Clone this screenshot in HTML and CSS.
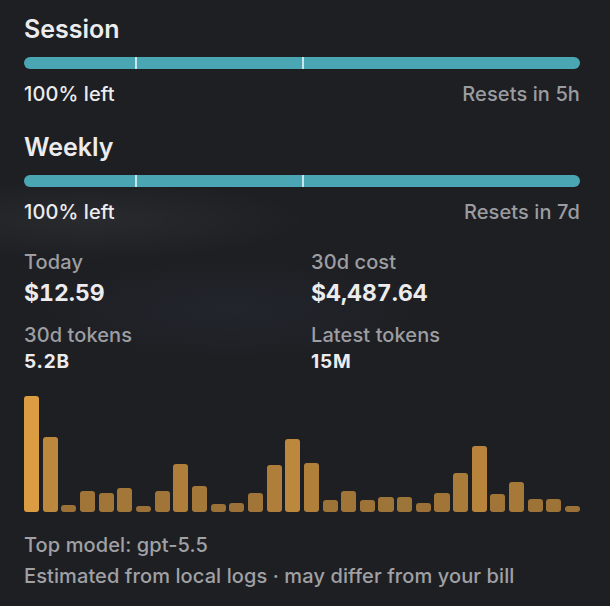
FILE: index.html
```html
<!DOCTYPE html>
<html lang="en">
<head>
    <meta charset="UTF-8">
    <meta name="viewport" content="width=device-width, initial-scale=1.0">
    <title>Usage</title>
    <link rel="stylesheet" href="styles.css">
</head>
<body>
    <div class="panel">
        <section class="limit">
            <div class="limit-title">Session</div>
            <div class="meter">
                <span class="tick" style="left: 20%"></span>
                <span class="tick" style="left: 50%"></span>
            </div>
            <div class="limit-foot">
                <span>100% left</span>
                <span class="muted">Resets in 5h</span>
            </div>
        </section>

        <section class="limit">
            <div class="limit-title">Weekly</div>
            <div class="meter">
                <span class="tick" style="left: 20%"></span>
                <span class="tick" style="left: 50%"></span>
            </div>
            <div class="limit-foot">
                <span>100% left</span>
                <span class="muted">Resets in 7d</span>
            </div>
        </section>

        <section class="stats">
            <div class="stat">
                <div class="stat-label">Today</div>
                <div class="stat-value big">$12.59</div>
            </div>
            <div class="stat">
                <div class="stat-label">30d cost</div>
                <div class="stat-value big">$4,487.64</div>
            </div>
            <div class="stat">
                <div class="stat-label">30d tokens</div>
                <div class="stat-value">5.2B</div>
            </div>
            <div class="stat">
                <div class="stat-label">Latest tokens</div>
                <div class="stat-value">15M</div>
            </div>
        </section>

        <div class="chart" id="chart"></div>

        <div class="footer">
            <div>Top model: gpt-5.5</div>
            <div>Estimated from local logs · may differ from your bill</div>
        </div>
    </div>

    <script>
        // daily token usage, last 30 days (px heights of the bars)
        const days = [116, 75, 7, 21, 19, 24, 6, 21, 48, 26, 8, 9, 19, 47, 73,
                      49, 12, 21, 12, 15, 15, 9, 19, 39, 66, 18, 30, 13, 13, 6];
        const chart = document.getElementById('chart');
        const max = Math.max(...days);

        days.forEach((h, i) => {
            const bar = document.createElement('div');
            bar.className = 'bar';
            bar.style.height = `${h}px`;
            bar.style.opacity = i === 0 ? 1 : (0.64 + 0.3 * h / max).toFixed(2);
            chart.appendChild(bar);
        });
    </script>
</body>
</html>
```

FILE: styles.css
```css
body {
    margin: 0;
    height: 606px;
    overflow: hidden;
    font-family: Inter, "Noto Sans", sans-serif;
    color: #ececee;
    background-color: #1e1f23;
    background-image:
        radial-gradient(ellipse 220px 40px at 90px 220px, rgba(255, 255, 255, 0.05), transparent),
        radial-gradient(ellipse 200px 50px at 230px 310px, rgba(70, 110, 150, 0.08), transparent);
}

.panel {
    padding: 14px 30px 0 24px;
}

.limit {
    margin-bottom: 26px;
}

.limit-title {
    font-size: 25px;
    line-height: 30px;
    font-weight: 600;
}

.meter {
    position: relative;
    height: 12px;
    margin: 13px 0;
    border-radius: 6px;
    background-color: #4ba6b4;
}

.meter .tick {
    position: absolute;
    top: 0;
    bottom: 0;
    width: 2px;
    background-color: #c3e7ec;
}

.limit-foot {
    display: flex;
    justify-content: space-between;
    font-size: 20px;
    line-height: 24px;
    font-weight: 500;
    letter-spacing: 0.1px;
}

.muted {
    color: #9b9ca0;
}

.stats {
    display: grid;
    grid-template-columns: 287px 1fr;
    row-gap: 16px;
    margin-top: 1px;
}

.stat-label {
    font-size: 20px;
    line-height: 24px;
    font-weight: 500;
    letter-spacing: 0.1px;
    color: #9d9ea2;
}

.stat-value {
    margin-top: 3px;
    font-size: 19px;
    line-height: 24px;
    font-weight: 700;
    letter-spacing: 0.8px;
}

.stat-value.big {
    margin-top: 5px;
    font-size: 23px;
    line-height: 28px;
    letter-spacing: 0;
    font-variant-numeric: tabular-nums;
}

.chart {
    display: flex;
    align-items: flex-end;
    gap: 3.6px;
    height: 116px;
    margin-top: 22px;
}

.bar {
    flex: 1;
    border-radius: 3px;
    background-color: #dc9d42;
}

.footer {
    margin-top: 18px;
    font-size: 20px;
    line-height: 31px;
    font-weight: 500;
    letter-spacing: 0.1px;
    color: #a0a1a5;
}
```
